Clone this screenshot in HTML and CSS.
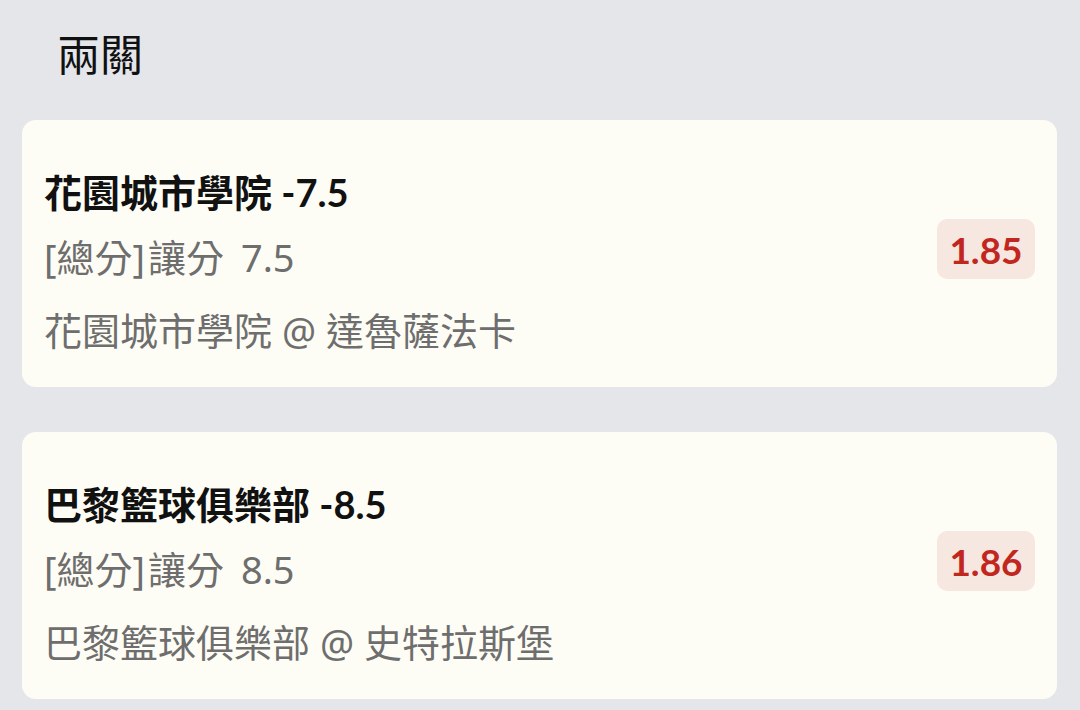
FILE: index.html
```html
<!DOCTYPE html>
<html lang="zh-Hant">
<head>
    <meta charset="UTF-8">
    <meta name="viewport" content="width=device-width, initial-scale=1.0">
    <title>兩關</title>
    <link rel="stylesheet" href="styles.css">
</head>
<body>
    <div class="page">
        <h1 class="page-title">兩關</h1>

        <div class="bet-card">
            <div class="bet-info">
                <div class="bet-pick">花園城市學院 -7.5</div>
                <div class="bet-market"><span class="bet-tag">[總分]</span>讓分 7.5</div>
                <div class="bet-match">花園城市學院 @ 達魯薩法卡</div>
            </div>
            <div class="bet-odds">1.85</div>
        </div>

        <div class="bet-card">
            <div class="bet-info">
                <div class="bet-pick">巴黎籃球俱樂部 -8.5</div>
                <div class="bet-market"><span class="bet-tag">[總分]</span>讓分 8.5</div>
                <div class="bet-match">巴黎籃球俱樂部 @ 史特拉斯堡</div>
            </div>
            <div class="bet-odds">1.86</div>
        </div>
    </div>
</body>
</html>
```

FILE: styles.css
```css
body {
    margin: 0;
    background: #e5e6ea;
    font-family: Lato, "Noto Sans CJK TC", sans-serif;
    color: #111;
}

.page {
    padding: 0 23px 0 22px;
}

.page-title {
    margin: 0 0 22px;
    padding: 10px 35px 4px;
    font-size: 43px;
    font-weight: 400;
    line-height: 84px;
    font-family: "Noto Sans CJK TC", sans-serif;
}

.bet-card {
    display: flex;
    align-items: center;
    justify-content: space-between;
    background: #fefdf5;
    border-radius: 14px;
    padding: 40px 22px 24px 22px;
    margin-bottom: 45px;
}

.bet-pick {
    font-size: 38px;
    font-weight: 700;
    line-height: 64px;
    color: #111;
}

.bet-market,
.bet-match {
    font-family: "Noto Sans", "Noto Sans CJK TC", sans-serif;
    font-size: 38px;
    line-height: 66px;
    color: #6e6e6e;
}

.bet-market {
    word-spacing: 7px;
}

.bet-tag {
    margin-right: 3px;
}

.bet-match {
    margin-top: 7px;
}

.bet-odds {
    width: 98px;
    height: 60px;
    margin-top: -25px;
    display: flex;
    align-items: center;
    justify-content: center;
    background: #f7e7e1;
    border-radius: 10px;
    color: #c1271f;
    font-size: 37px;
    font-weight: 700;
}
```
